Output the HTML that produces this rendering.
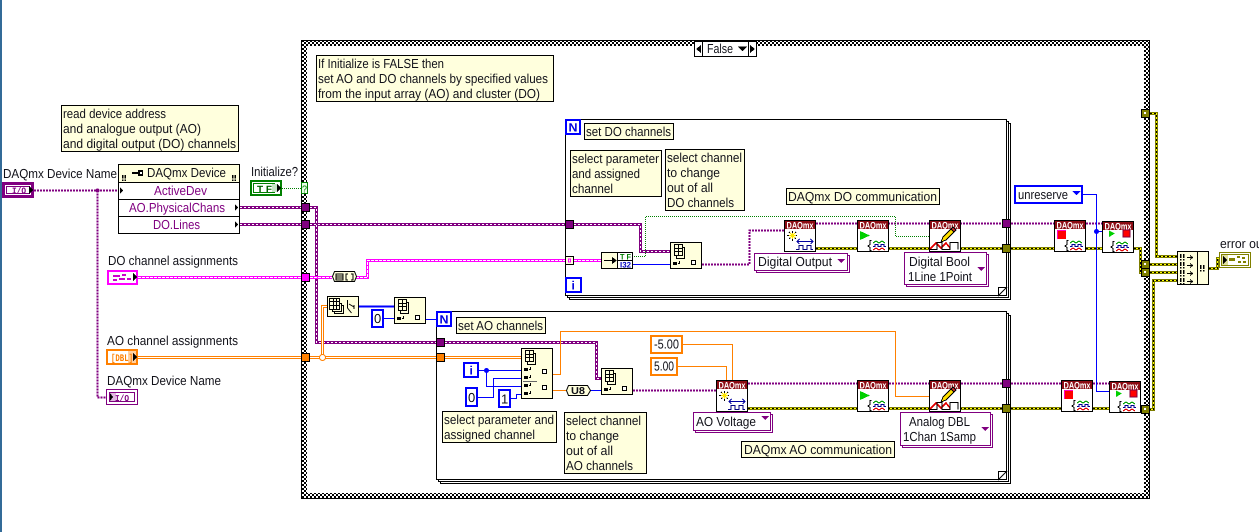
<!DOCTYPE html>
<html><head><meta charset="utf-8"><title>Block diagram</title>
<style>
html,body{margin:0;padding:0;background:#fff;width:1259px;height:532px;overflow:hidden}
svg{display:block;position:absolute;left:0;top:0}
text{font-family:"Liberation Sans",sans-serif;font-size:13px;fill:#101018;text-rendering:geometricPrecision}
path,rect,line{shape-rendering:crispEdges}
.w{fill:none}
.pt{stroke:#800080;stroke-width:3}
.ptw{stroke:#fff;stroke-width:1;stroke-dasharray:2 2}
.pn{stroke:#800080;stroke-width:2;stroke-dasharray:2 1}
.ea{stroke:#7d7d00;stroke-width:3}
.eb{stroke:#ffff00;stroke-width:1}
.ec{stroke:#000;stroke-width:1;stroke-dasharray:2 2}
.gr{stroke:#008000;stroke-width:1;stroke-dasharray:1 1}
.pk{stroke:#ff00ff;stroke-width:3}
.pkw{stroke:#fff;stroke-width:1;stroke-dasharray:3 1}
.or2{stroke:#ff8000;stroke-width:3}
.or2w{stroke:#fff;stroke-width:1}
.or{stroke:#ff8000;stroke-width:1}
.bl{stroke:#0000ff;stroke-width:1}
.bl2{stroke:#0000ff;stroke-width:2}
.c{fill:#ffffdd;stroke:#000;stroke-width:1}
.dq{font-size:9.5px;font-weight:bold;fill:#fff}
.ctr{text-anchor:middle}
</style></head><body>
<svg width="1259" height="532" viewBox="0 0 1259 532" xmlns="http://www.w3.org/2000/svg">
<defs>
<pattern id="chk" width="4" height="4" patternUnits="userSpaceOnUse"><rect width="4" height="4" fill="#000"/><rect width="2" height="2" fill="#fff"/><rect x="2" y="2" width="2" height="2" fill="#fff"/></pattern>
<g id="nf"><rect x=".5" y=".5" width="31" height="31" fill="#fff" stroke="#000"/><rect x="1" y="1" width="30" height="8" fill="#8b0a12"/></g>
<g id="icreate"><path d="M3 15.500h10M8.500 11v10M5 12l7 7M12 12l-7 7" stroke="#000" fill="none"/><path d="M5 15.500h7M8.500 13v6M6 13l5 5M11 13l-5 5" stroke="#ffe800" fill="none"/><path d="M13 21.500h16M15.500 19l-2.500 2.500 2.500 2.500M26.500 19l2.500 2.500-2.500 2.500" stroke="#0000a0" fill="none"/><path d="M12 29.500h3v-4h4v4h4v-4h4v4h2" stroke="#000080" fill="none"/></g>
<g id="iwave"><path d="M14.500 20.500h-1.500v4l-2 1.500 2 1.500v3h1.500" stroke="#000" fill="none"/><path d="M16 23l3-2 3 2 3-2 3 2" stroke="#00a000" fill="none"/><path d="M16 26.500h2v-2h3v2h3v-2h3v2h2" stroke="#000090" fill="none"/><path d="M16 30l3-2 3 2 3-2 3 2" stroke="#e00000" fill="none"/></g>
<g id="istart"><path d="M3 11L3 20L13 15.500Z" fill="#00d000"/><use href="#iwave"/></g>
<g id="istop"><rect x="3" y="10" width="9" height="9" fill="#ff0000"/><path d="M3 10h9v1h-8v8h-1z" fill="#ff00c0"/><use href="#iwave"/></g>
<g id="iclear"><path d="M7 9.500L7 16L13 12.500Z" fill="#00d000"/><rect x="21" y="9" width="7" height="7" fill="#ff0000" stroke="#800040"/><use href="#iwave" transform="translate(-2,0)"/></g>
<g id="iwrite"><path d="M1 29l6-6 5 5 5-5 4 5" stroke="#e00000" fill="none" stroke-width="1.500"/><path d="M1 29.500h7v-7h5v7h8v-7h8v7" stroke="#000" fill="none"/><path d="M12 22l2-5 8-8 3 3-8 8z" fill="#ffe000" stroke="#000"/><path d="M22 9l3 3 2-2-3-3z" fill="#d03030" stroke="#000"/></g>
<g id="idx"><path d="M4.500 2.500h8v11h-8zM6.500 13.500v3h8v-11h-2M4.500 6.500h8M4.500 9.500h8M8.500 2.500v11" stroke="#000" fill="#ffffdd"/><rect x="3" y="20" width="4" height="3" fill="#000"/><path d="M8 21.500h2M9.500 19v3" stroke="#000" fill="none"/><rect x="21.500" y="18.500" width="4" height="4" fill="#fff" stroke="#000"/></g>
<path id="bang" d="M0 0h1.500v4h-1.500zM3 0h1.500v4h-1.500zM0 5h1.500v1.500h-1.500zM3 5h1.500v1.500h-1.500z" fill="#000"/>
<g id="marr"><use href="#bang"/><path d="M7 3.500h5M10 1.500l2.500 2-2.500 2" stroke="#000" fill="none"/></g>
</defs>

<rect x="0" y="0" width="2" height="532" fill="#336b98"/>

<!-- case structure -->
<rect x="304" y="43" width="843" height="453" fill="#fff" stroke="url(#chk)" stroke-width="6"/>
<rect x="301.500" y="40.500" width="848" height="458" fill="none" stroke="#000"/>
<rect x="694.500" y="41.500" width="62" height="15" fill="#fff" stroke="#000"/>
<path d="M702.500 41v15M748.500 41v15" stroke="#000"/>
<path d="M701 45v8l-5-4zM750 45v8l5-4z" fill="#000"/>
<path d="M738 46.500h9l-4.500 5z" fill="#000"/>
<text x="707" y="53" textLength="26" lengthAdjust="spacingAndGlyphs">False</text>

<!-- for loops -->
<rect x="569.500" y="123.500" width="441" height="176" fill="#fff" stroke="#000"/>
<rect x="567.500" y="121.500" width="441" height="176" fill="#fff" stroke="#000"/>
<rect x="565.500" y="119.500" width="441" height="176" fill="#fff" stroke="#000"/>
<path d="M998.500 295.500L1006.500 287.500H998.500Z" fill="#fff" stroke="#000" style="shape-rendering:auto"/>
<rect x="440.500" y="315.500" width="570" height="168" fill="#fff" stroke="#000"/>
<rect x="438.500" y="313.500" width="570" height="168" fill="#fff" stroke="#000"/>
<rect x="436.500" y="311.500" width="570" height="168" fill="#fff" stroke="#000"/>
<path d="M998.500 479.500L1006.500 471.500H998.500Z" fill="#fff" stroke="#000" style="shape-rendering:auto"/>

<!-- wires -->
<path class="w pt" d="M240 207.500H301M310 207.500H316.500V342.500H437M445 342.500H596.500V378.500H601M240 224.500H301M310 224.500H565M574 224.500H640.500V251.500H670"/>
<path class="w ptw" d="M240 207.500H301M310 207.500H316.500V342.500H437M445 342.500H596.500V378.500H601M240 224.500H301M310 224.500H565M574 224.500H640.500V251.500H670"/>
<path class="w pn" d="M34 190.500H118M97.500 190.500V397.500H107M702 264.500H749.500V230.500H784M816 223.500H1002M1011 223.500H1054M1086 223.500H1102M633 390.500H716M748 383.500H1002M1011 383.500H1061M1093 383.500H1109"/>
<circle cx="97.500" cy="190.500" r="2" fill="#800080"/>
<path class="w ea" d="M816 248.500H1002M1011 248.500H1054M1086 248.500H1102M1134 248.500H1140.500V272.500H1142M1140.500 264.500H1142M748 408.500H1002M1011 408.500H1061M1093 408.500H1109M1150 113.500H1156.500V256.500H1177M1150 264.500H1177M1150 272.500H1177M1149 409.500H1153.500V280.500H1177M1209 268.500H1217.500V258.500H1220"/>
<path class="w eb" d="M816 248.500H1002M1011 248.500H1054M1086 248.500H1102M1134 248.500H1140.500V272.500H1142M1140.500 264.500H1142M748 408.500H1002M1011 408.500H1061M1093 408.500H1109M1150 113.500H1156.500V256.500H1177M1150 264.500H1177M1150 272.500H1177M1149 409.500H1153.500V280.500H1177M1209 268.500H1217.500V258.500H1220"/>
<path class="w ec" d="M816 248.500H1002M1011 248.500H1054M1086 248.500H1102M1134 248.500H1140.500V272.500H1142M1140.500 264.500H1142M748 408.500H1002M1011 408.500H1061M1093 408.500H1109M1150 113.500H1156.500V256.500H1177M1150 264.500H1177M1150 272.500H1177M1149 409.500H1153.500V280.500H1177M1209 268.500H1217.500V258.500H1220"/>
<path class="w gr" d="M282 188.500H301M632 256.500H645.500V216.500H895.500V236.500H929"/>
<path class="w pk" d="M138 277.500H301M310 277.500H332M356 277.500H367.500V260.500H565M574 260.500H601"/>
<path class="w pkw" d="M138 277.500H301M310 277.500H332M356 277.500H367.500V260.500H565M574 260.500H601"/>
<path class="w or2" d="M138 357.500H301M310 357.500H437M445 357.500H521M322.500 357.500V306.500H327"/>
<path class="w or2w" d="M138 357.500H301M310 357.500H437M445 357.500H521M322.500 357.500V306.500H327"/>
<circle cx="322.500" cy="357.500" r="3" fill="#fff" stroke="#ff8000"/>
<path class="w or" d="M553 374.500H560.500V331.500H895.500V396.500H929M553 390.500H566M683 344.500H732.500V380M678 366.500H726.500V380"/>
<path class="w bl" d="M1083 194.500H1096.500V391.500H1109M1096.500 231.500H1102M632 264.500H670M383 318.500H394M426 319.500H437M478 370.500H521M486.500 370.500V386.500H521M478 397.500H493.500V378.500H521M511 398.500H516.500V394.500H521M590 390.500H601"/>
<path class="w bl2" d="M358 306.500H394"/>
<circle cx="1096.500" cy="231.500" r="2.500" fill="#0000ff"/>
<circle cx="486.500" cy="370.500" r="2.500" fill="#0000ff"/>

<!-- tunnels -->
<g stroke="#000">
<rect x="301.500" y="203.500" width="8" height="8" fill="#800080"/>
<rect x="301.500" y="220.500" width="8" height="8" fill="#800080"/>
<rect x="301.500" y="273.500" width="8" height="8" fill="#ff00ff"/>
<rect x="301.500" y="353.500" width="8" height="8" fill="#ff8000"/>
<rect x="565.500" y="220.500" width="8" height="8" fill="#800080"/>
<rect x="565.500" y="256.500" width="8" height="8" fill="#ffffdd"/>
<rect x="436.500" y="338.500" width="8" height="8" fill="#800080"/>
<rect x="436.500" y="353.500" width="8" height="8" fill="#ff8000"/>
<rect x="1002.500" y="219.500" width="8" height="8" fill="#800080"/>
<rect x="1002.500" y="244.500" width="8" height="8" fill="#808000"/>
<rect x="1002.500" y="379.500" width="8" height="8" fill="#800080"/>
<rect x="1002.500" y="404.500" width="8" height="8" fill="#808000"/>
<rect x="1141.500" y="109.500" width="8" height="8" fill="#808000"/>
<rect x="1141.500" y="260.500" width="8" height="8" fill="#808000"/>
<rect x="1141.500" y="268.500" width="8" height="8" fill="#808000"/>
<rect x="1141.500" y="405.500" width="8" height="8" fill="#808000"/>
</g>
<path d="M568 259h3M568 262h3M568.500 259v3M570.500 259v3" stroke="#ff00ff" fill="none"/>
<g fill="#fff"><rect x="1144" y="112" width="2" height="2"/><rect x="1144" y="263" width="2" height="2"/><rect x="1144" y="271" width="2" height="2"/><rect x="1144" y="408" width="2" height="2"/></g>

<!-- comments -->
<rect class="c" x="61.500" y="105.500" width="177" height="46"/>
<text x="63" y="118" textLength="103" lengthAdjust="spacingAndGlyphs">read device address</text>
<text x="63" y="133" textLength="138" lengthAdjust="spacingAndGlyphs">and analogue output (AO)</text>
<text x="63" y="148" textLength="173" lengthAdjust="spacingAndGlyphs">and digital output (DO) channels</text>

<rect class="c" x="316.500" y="55.500" width="237" height="46"/>
<text x="318" y="68" textLength="126" lengthAdjust="spacingAndGlyphs">If Initialize is FALSE then</text>
<text x="318" y="83" textLength="230" lengthAdjust="spacingAndGlyphs">set AO and DO channels by specified values</text>
<text x="318" y="98" textLength="222" lengthAdjust="spacingAndGlyphs">from the input array (AO) and cluster (DO)</text>

<rect class="c" x="584.500" y="123.500" width="89" height="16"/>
<text x="586" y="136" textLength="85" lengthAdjust="spacingAndGlyphs">set DO channels</text>

<rect class="c" x="570.500" y="150.500" width="91" height="46"/>
<text x="572" y="163" textLength="87" lengthAdjust="spacingAndGlyphs">select parameter</text>
<text x="572" y="178" textLength="68" lengthAdjust="spacingAndGlyphs">and assigned</text>
<text x="572" y="193" textLength="41" lengthAdjust="spacingAndGlyphs">channel</text>

<rect class="c" x="665.500" y="149.500" width="79" height="61"/>
<text x="667" y="162" textLength="75" lengthAdjust="spacingAndGlyphs">select channel</text>
<text x="667" y="177" textLength="53" lengthAdjust="spacingAndGlyphs">to change</text>
<text x="667" y="192" textLength="46" lengthAdjust="spacingAndGlyphs">out of all</text>
<text x="667" y="207" textLength="67" lengthAdjust="spacingAndGlyphs">DO channels</text>

<rect class="c" x="786.500" y="188.500" width="153" height="16"/>
<text x="788" y="201" textLength="149" lengthAdjust="spacingAndGlyphs">DAQmx DO communication</text>

<rect class="c" x="456.500" y="317.500" width="89" height="16"/>
<text x="458" y="330" textLength="85" lengthAdjust="spacingAndGlyphs">set AO channels</text>

<rect class="c" x="442.500" y="411.500" width="114" height="31"/>
<text x="444" y="424" textLength="110" lengthAdjust="spacingAndGlyphs">select parameter and</text>
<text x="444" y="439" textLength="91" lengthAdjust="spacingAndGlyphs">assigned channel</text>

<rect class="c" x="564.500" y="412.500" width="82" height="61"/>
<text x="566" y="425" textLength="75" lengthAdjust="spacingAndGlyphs">select channel</text>
<text x="566" y="440" textLength="53" lengthAdjust="spacingAndGlyphs">to change</text>
<text x="566" y="455" textLength="47" lengthAdjust="spacingAndGlyphs">out of all</text>
<text x="566" y="470" textLength="67" lengthAdjust="spacingAndGlyphs">AO channels</text>

<rect class="c" x="741.500" y="441.500" width="153" height="16"/>
<text x="744" y="454" textLength="148" lengthAdjust="spacingAndGlyphs">DAQmx AO communication</text>

<!-- left labels -->
<text x="3" y="178" textLength="114" lengthAdjust="spacingAndGlyphs">DAQmx Device Name</text>
<text x="251" y="176" textLength="47" lengthAdjust="spacingAndGlyphs">Initialize?</text>
<text x="108" y="265" textLength="130" lengthAdjust="spacingAndGlyphs">DO channel assignments</text>
<text x="107" y="345" textLength="131" lengthAdjust="spacingAndGlyphs">AO channel assignments</text>
<text x="107" y="385" textLength="114" lengthAdjust="spacingAndGlyphs">DAQmx Device Name</text>
<text x="1220" y="248" textLength="46" lengthAdjust="spacingAndGlyphs">error out</text>

<!-- I/O control -->
<rect x="3.500" y="183.500" width="29" height="13" fill="#fff" stroke="#800080" stroke-width="3"/>
<rect x="6.500" y="186.500" width="23" height="7" fill="#fff" stroke="#800080"/>
<text x="12" y="193.500" textLength="14" lengthAdjust="spacingAndGlyphs" style="font-size:9px;font-family:'Liberation Mono',monospace;fill:#800080;font-weight:bold">I/O</text>
<path d="M29 186v8l4-4z" fill="#000"/>

<!-- property node -->
<rect x="118.500" y="164.500" width="121" height="69" fill="#fff" stroke="#000"/>
<rect x="119" y="165" width="120" height="17" fill="#ffffdd"/>
<path d="M118 182.500h122M118 199.500h122M118 216.500h122" stroke="#000"/>
<path d="M122 175h1.500v3.500h-1.500zM124.500 175h1.500v3.500h-1.500zM232 175h1.500v3.500h-1.500zM234.500 175h1.500v3.500h-1.500zM122 179.500h1.500v1.500h-1.500zM124.500 179.500h1.500v1.500h-1.500zM232 179.500h1.500v1.500h-1.500zM234.500 179.500h1.500v1.500h-1.500z" fill="#000"/>
<path d="M132 172h6v2h-6zM138 170h5v6h-5z" fill="#000"/><rect x="140" y="172" width="2" height="2" fill="#fff"/>
<text x="147" y="177" textLength="79" lengthAdjust="spacingAndGlyphs">DAQmx Device</text>
<text x="154" y="195" textLength="53" lengthAdjust="spacingAndGlyphs" style="fill:#800080">ActiveDev</text>
<text x="129" y="212" textLength="96" lengthAdjust="spacingAndGlyphs" style="fill:#800080">AO.PhysicalChans</text>
<text x="153" y="229" textLength="47" lengthAdjust="spacingAndGlyphs" style="fill:#800080">DO.Lines</text>
<path d="M120 187v7l3-3.500zM235 204v7l3-3.500zM235 221v7l3-3.500z" fill="#000"/>

<!-- TF control -->
<rect x="251" y="181" width="30" height="14" fill="#fff" stroke="#008000" stroke-width="2"/>
<rect x="253.500" y="183.500" width="21" height="9" fill="#fff" stroke="#008000"/>
<rect x="272" y="184" width="6" height="8" fill="#c8e4c8"/>
<text x="257" y="192" textLength="15" lengthAdjust="spacingAndGlyphs" style="font-size:9px;font-weight:bold;fill:#006000">T F</text>
<path d="M277 184v8l4-4z" fill="#000"/>
<rect x="301.500" y="182.500" width="6" height="11" fill="#e8ffe8" stroke="#008000"/>
<text x="302" y="192.500" textLength="5" lengthAdjust="spacingAndGlyphs" style="font-size:10px;fill:#008000">?</text>

<!-- DO control -->
<rect x="108" y="271" width="29" height="13" fill="#fff" stroke="#ff00ff" stroke-width="2"/>
<path d="M113 275h7v2h-7zM122 274h4v2h-4zM113 279h4v2h-4zM119 278h6v2h-6zM127 278h4v2h-4z" fill="#cc00cc"/>
<path d="M133 273v8l4-4z" fill="#000"/>

<!-- DBL control -->
<rect x="107" y="350" width="30" height="14" fill="#fff" stroke="#ff8000" stroke-width="2"/>
<rect x="128" y="351" width="8" height="12" fill="#ffd0a0"/>
<text x="111" y="361" textLength="22" lengthAdjust="spacingAndGlyphs" style="font-size:10px;font-family:'Liberation Mono',monospace;font-weight:bold;fill:#ff8000">[DBL]</text>
<path d="M133 353v8l4-4z" fill="#000"/>

<!-- I/O indicator -->
<rect x="106.500" y="389.500" width="31" height="15" fill="#fff" stroke="#800080"/>
<rect x="109.500" y="392.500" width="25" height="9" fill="#fff" stroke="#800080"/>
<rect x="110" y="393" width="6" height="8" fill="#e0b8e0"/>
<path d="M110 393v8l3-4z" fill="#000"/>
<text x="115" y="401" textLength="14" lengthAdjust="spacingAndGlyphs" style="font-size:9px;font-family:'Liberation Mono',monospace;fill:#800080;font-weight:bold">I/O</text>

<!-- unbundle -->
<path d="M334.500 271.500H354.500L356.500 276.500L354.500 281.500H334.500L332.500 276.500Z" fill="#ffffdd" stroke="#000" style="shape-rendering:auto"/>
<path d="M336 274h7v6h-7zM336 276h7M336 278h7M348 274h-2v6h2M351 274h2v6h-2" stroke="#000" fill="none"/>

<!-- array size node -->
<rect x="327.500" y="296.500" width="31" height="20" fill="#ffffdd" stroke="#000"/>
<path d="M329.500 298.500h10v11h-10zM329.500 301.500h10M329.500 305.500h10M333.500 298.500v11M336.500 298.500v11M339.500 303.500h2v8h-9v-2M341.500 305.500h2v8h-9v-2" stroke="#000" fill="none"/>
<path d="M347.500 300v8l4 5M349 304l5 3M354 305v4" stroke="#000" fill="none" style="shape-rendering:auto"/>

<!-- index array nodes -->
<g transform="translate(394,297)"><rect x=".5" y=".5" width="31" height="26" fill="#ffffdd" stroke="#000"/><use href="#idx"/></g>
<g transform="translate(670,242)"><rect x=".5" y=".5" width="31" height="26" fill="#ffffdd" stroke="#000"/><use href="#idx"/></g>
<g transform="translate(601,368)"><rect x=".5" y=".5" width="31" height="26" fill="#ffffdd" stroke="#000"/><use href="#idx"/></g>
<g transform="translate(521,348)"><rect x=".5" y=".5" width="31" height="50" fill="#ffffdd" stroke="#000"/><path d="M4.500 2.500h8v11h-8zM6.500 13.500v3h8v-11h-2M4.500 6.500h8M4.500 9.500h8M8.500 2.500v11" stroke="#000" fill="#ffffdd"/>
<rect x="3" y="20" width="4" height="3" fill="#000"/><path d="M8 21.500h2M9.500 19v3" stroke="#000"/>
<rect x="3" y="28" width="4" height="3" fill="#000"/><path d="M8 29.500h2M9.500 27v3" stroke="#000"/>
<rect x="21.500" y="21.500" width="4" height="4" fill="#fff" stroke="#000"/>
<path d="M2 33.500h14" stroke="#666"/>
<rect x="3" y="36" width="4" height="3" fill="#000"/><path d="M8 37.500h2M9.500 35v3" stroke="#000"/>
<rect x="3" y="44" width="4" height="3" fill="#000"/><path d="M8 45.500h2M9.500 43v3" stroke="#000"/>
<rect x="21.500" y="37.500" width="4" height="4" fill="#fff" stroke="#000"/></g>

<!-- conversion node -->
<rect x="601.500" y="252.500" width="31" height="16" fill="#ffffdd" stroke="#000"/>
<rect x="618" y="253" width="14" height="7" fill="#fff"/><rect x="618" y="261" width="14" height="7" fill="#fff"/>
<path d="M617.500 252v16M618 260.500h14" stroke="#000"/>
<path d="M604 260h8v-3l5 3.500-5 3.500v-3h-8z" fill="#000"/>
<text x="620" y="259.500" textLength="11" lengthAdjust="spacingAndGlyphs" style="font-size:8px;font-weight:bold;fill:#008000">T F</text>
<text x="620" y="267.500" textLength="11" lengthAdjust="spacingAndGlyphs" style="font-size:8px;font-weight:bold;fill:#0000c0">I32</text>

<!-- U8 -->
<path d="M568.500 385.500H587.500L590.500 390.500L587.500 395.500H568.500L566.500 390.500Z" fill="#ffffdd" stroke="#000" style="shape-rendering:auto"/>
<text x="571" y="394" textLength="14" lengthAdjust="spacingAndGlyphs" style="font-size:10px;font-weight:bold">U8</text>

<!-- loop terminals -->
<rect x="566" y="120" width="14" height="14" fill="#fff" stroke="#0000ff" stroke-width="2"/>
<text x="568.500" y="131.500" textLength="9" lengthAdjust="spacingAndGlyphs" style="font-size:12px;font-weight:bold;fill:#0000e0">N</text>
<rect x="566" y="278" width="15" height="14" fill="#fff" stroke="#0000ff" stroke-width="2"/>
<text x="571.500" y="289.500" style="font-size:12px;font-weight:bold;fill:#0000e0">i</text>
<rect x="437" y="312" width="14" height="14" fill="#fff" stroke="#0000ff" stroke-width="2"/>
<text x="439.500" y="323.500" textLength="9" lengthAdjust="spacingAndGlyphs" style="font-size:12px;font-weight:bold;fill:#0000e0">N</text>
<rect x="464" y="363" width="14" height="14" fill="#fff" stroke="#0000ff" stroke-width="2"/>
<text x="469.500" y="374.500" style="font-size:12px;font-weight:bold;fill:#0000e0">i</text>

<!-- constants -->
<rect x="372" y="310" width="11" height="17" fill="#fff" stroke="#0000ff" stroke-width="2"/>
<text x="374" y="323">0</text>
<rect x="466" y="388" width="11" height="18" fill="#fff" stroke="#0000ff" stroke-width="2"/>
<text x="468" y="402">0</text>
<rect x="499" y="390" width="11" height="17" fill="#fff" stroke="#0000ff" stroke-width="2"/>
<text x="501" y="403.500">1</text>
<rect x="651" y="336" width="31" height="17" fill="#fff" stroke="#ff8000" stroke-width="2"/>
<text x="654" y="348.500" textLength="25" lengthAdjust="spacingAndGlyphs">-5.00</text>
<rect x="651" y="358" width="26" height="17" fill="#fff" stroke="#ff8000" stroke-width="2"/>
<text x="654" y="370.500" textLength="20" lengthAdjust="spacingAndGlyphs">5.00</text>

<!-- enums -->
<rect x="756.500" y="255.500" width="93" height="17" fill="#fff" stroke="#800080"/>
<rect x="754.500" y="253.500" width="93" height="17" fill="#fff" stroke="#800080"/>
<text x="758" y="266" textLength="74" lengthAdjust="spacingAndGlyphs">Digital Output</text>
<path d="M837 259h8l-4 4z" fill="#800080"/>

<rect x="906.500" y="254.500" width="82" height="32" fill="#fff" stroke="#800080"/>
<rect x="904.500" y="252.500" width="82" height="32" fill="#fff" stroke="#800080"/>
<text x="909" y="266" textLength="61" lengthAdjust="spacingAndGlyphs">Digital Bool</text>
<text x="908" y="281" textLength="64" lengthAdjust="spacingAndGlyphs">1Line 1Point</text>
<path d="M977 267h8l-4 4z" fill="#800080"/>

<rect x="695.500" y="414.500" width="77" height="18" fill="#fff" stroke="#800080"/>
<rect x="693.500" y="412.500" width="77" height="18" fill="#fff" stroke="#800080"/>
<text x="696" y="426" textLength="60" lengthAdjust="spacingAndGlyphs">AO Voltage</text>
<path d="M761 416h8l-4 4z" fill="#800080"/>

<rect x="902.500" y="414.500" width="90" height="33" fill="#fff" stroke="#800080"/>
<rect x="900.500" y="412.500" width="90" height="33" fill="#fff" stroke="#800080"/>
<text x="909" y="426" textLength="61" lengthAdjust="spacingAndGlyphs">Analog DBL</text>
<text x="903" y="441" textLength="73" lengthAdjust="spacingAndGlyphs">1Chan 1Samp</text>
<path d="M981 427h8l-4 4z" fill="#800080"/>

<!-- unreserve -->
<rect x="1015" y="186" width="67" height="17" fill="#fff" stroke="#0000ff" stroke-width="2"/>
<text x="1018" y="199" textLength="50" lengthAdjust="spacingAndGlyphs">unreserve</text>
<path d="M1072 191h9l-4.500 4z" fill="#0000ff"/>

<!-- DAQmx nodes -->
<g transform="translate(784,220)"><use href="#nf"/><text class="dq ctr" x="16" y="8.500" textLength="27" lengthAdjust="spacingAndGlyphs">DAQmx</text><use href="#icreate"/></g>
<g transform="translate(857,220)"><use href="#nf"/><text class="dq ctr" x="16" y="8.500" textLength="27" lengthAdjust="spacingAndGlyphs">DAQmx</text><use href="#istart"/></g>
<g transform="translate(929,220)"><use href="#nf"/><text class="dq ctr" x="16" y="8.500" textLength="27" lengthAdjust="spacingAndGlyphs">DAQmx</text><use href="#iwrite"/></g>
<g transform="translate(1054,220)"><use href="#nf"/><text class="dq ctr" x="16" y="8.500" textLength="27" lengthAdjust="spacingAndGlyphs">DAQmx</text><use href="#istop"/></g>
<g transform="translate(1102,221)"><use href="#nf"/><text class="dq ctr" x="16" y="8.500" textLength="27" lengthAdjust="spacingAndGlyphs">DAQmx</text><use href="#iclear"/></g>
<g transform="translate(716,380)"><use href="#nf"/><text class="dq ctr" x="16" y="8.500" textLength="27" lengthAdjust="spacingAndGlyphs">DAQmx</text><use href="#icreate"/></g>
<g transform="translate(857,380)"><use href="#nf"/><text class="dq ctr" x="16" y="8.500" textLength="27" lengthAdjust="spacingAndGlyphs">DAQmx</text><use href="#istart"/></g>
<g transform="translate(929,380)"><use href="#nf"/><text class="dq ctr" x="16" y="8.500" textLength="27" lengthAdjust="spacingAndGlyphs">DAQmx</text><use href="#iwrite"/></g>
<g transform="translate(1061,380)"><use href="#nf"/><text class="dq ctr" x="16" y="8.500" textLength="27" lengthAdjust="spacingAndGlyphs">DAQmx</text><use href="#istop"/></g>
<g transform="translate(1109,381)"><use href="#nf"/><text class="dq ctr" x="16" y="8.500" textLength="27" lengthAdjust="spacingAndGlyphs">DAQmx</text><use href="#iclear"/></g>

<!-- merge errors -->
<rect x="1177.500" y="251.500" width="31" height="33" fill="#ffffdd" stroke="#000"/>
<path d="M1197.500 251v33" stroke="#000"/>
<use href="#marr" x="1180" y="254"/><use href="#marr" x="1180" y="262"/><use href="#marr" x="1180" y="270"/><use href="#marr" x="1180" y="278"/>
<use href="#bang" x="1200" y="265"/>

<!-- error out -->
<rect x="1219.500" y="252.500" width="31" height="15" fill="#fff" stroke="#808000" stroke-width="1"/>
<rect x="1221.500" y="254.500" width="27" height="11" fill="#fff" stroke="#808000"/>
<rect x="1222" y="255" width="6" height="10" fill="#dede9c"/>
<path d="M1223 256v8l4-4z" fill="#000"/>
<path d="M1229 258h6v3h-6zM1237 256h3v2h-3zM1242 257h3v2h-3zM1238 261h3v2h-3zM1243 261h3v2h-3z" fill="#808000"/>
</svg>
</body></html>
